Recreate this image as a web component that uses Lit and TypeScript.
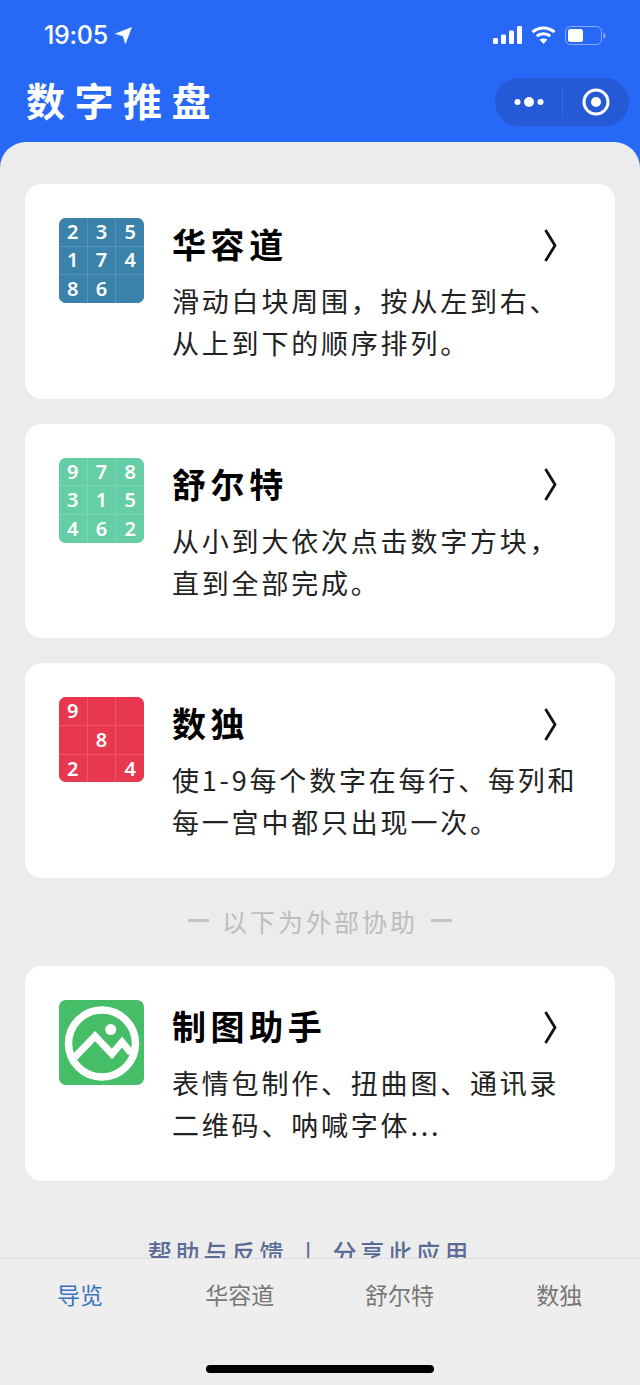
import { LitElement, html, css } from "lit";
import { customElement } from "lit/decorators.js";

const chevron = html`<svg class="chev" width="13" height="33" viewBox="0 0 13 33"><path d="M1.5 1 L11 16.5 L1.5 32" fill="none" stroke="#111" stroke-width="2.8"/></svg>`;

const mountain = html`<svg class="tile" viewBox="0 0 85 85" width="85" height="85">
  <rect width="85" height="85" rx="7" fill="#46bd67"/>
  <circle cx="43" cy="43.5" r="33.5" fill="none" stroke="#fff" stroke-width="7.5"/>
  <polyline points="16,57 36,36 53,54 63,42 72,53" fill="none" stroke="#fff" stroke-width="7"/>
  <circle cx="51.7" cy="29.5" r="5.5" fill="#fff"/>
</svg>`;

const CARDS = [
  { tone: "blue", cells: ["2","3","5","1","7","4","8","6",""], title: "华容道", lines: ["滑动白块周围，按从左到右、", "从上到下的顺序排列。"] },
  { tone: "green", cells: ["9","7","8","3","1","5","4","6","2"], title: "舒尔特", lines: ["从小到大依次点击数字方块，", "直到全部完成。"] },
  { tone: "red", cells: ["9","","","","8","","2","","4"], title: "数独", lines: ["使1-9每个数字在每行、每列和", "每一宫中都只出现一次。"] },
];

@customElement("app-root")
export class AppRoot extends LitElement {
  static styles = css`
    :host { display: block; width: 640px; height: 1385px; overflow: hidden; font-family: "Noto Sans CJK SC", "Noto Sans", sans-serif; background: #ececec; }
    .page { display: flex; flex-direction: column; height: 1385px; }
    header { background: #2868f6; height: 142px; flex: none; color: #fff; display: flex; flex-direction: column; box-sizing: border-box; padding: 0 11px 0 26px; }
    .status { display: flex; justify-content: space-between; align-items: center; height: 24px; margin-top: 23px; padding: 0 23px 0 18px; }
    .time { display: flex; align-items: center; gap: 7px; font: 500 25px/24px Inter, "Liberation Sans", sans-serif; letter-spacing: -0.3px; }
    .sys { display: flex; align-items: center; gap: 9px; }
    .nav { display: flex; justify-content: space-between; align-items: center; margin-top: 31px; }
    h1 { margin: -7px 0 0; font-size: 39px; line-height: 48px; font-weight: 700; letter-spacing: 9.5px; }
    .capsule { width: 134px; height: 48px; border-radius: 24px; background: #2559d6; display: grid; grid-template-columns: 67px 1px 66px; align-items: center; justify-items: center; }
    .capsule i { width: 1px; height: 28px; background: #3a6cdf; }
    main { flex: 1; min-height: 0; overflow: hidden; background: #2868f6; }
    .sheet { background: #ececec; border-radius: 26px 26px 0 0; padding: 42px 25px 0; height: 100%; box-sizing: border-box; overflow: hidden; display: flex; flex-direction: column; gap: 25px; }
    .card { background: #fff; border-radius: 17px; height: 214.7px; flex: none; box-sizing: border-box; padding: 34px 34px 0; display: flex; gap: 28px; }
    .tile { flex: none; width: 85px; height: 85px; display: block; }
    .grid { border-radius: 7px; overflow: hidden; display: grid; grid-template-columns: repeat(3, 1fr); grid-template-rows: repeat(3, 1fr); gap: 1px; }
    .grid span { display: flex; align-items: center; justify-content: center; color: #fff; font: 600 20px/1 "Noto Sans", sans-serif; }
    .blue { background: #5592b5; } .blue span { background: #3a82a9; }
    .green { background: #7bd6b3; } .green span { background: #66cea6; }
    .red { background: #ec5468; } .red span { background: #e8384f; }
    .text { flex: 1; min-width: 0; }
    .row { display: flex; justify-content: space-between; align-items: center; height: 44px; margin-top: 4px; padding-right: 24px; margin-bottom: 14px; }
    h2 { margin: 0; font-size: 34px; line-height: 44px; font-weight: 700; letter-spacing: 4.6px; color: #000; }
    p { margin: 0; font-size: 27px; line-height: 42px; letter-spacing: 2.8px; color: #222; white-space: nowrap; }
    .chev { display: block; margin-top: 2px; }
    .sep { flex: none; height: 38px; box-sizing: border-box; padding-bottom: 3px; display: flex; justify-content: center; align-items: center; color: #bdbdbd; font-size: 25px; letter-spacing: 3px; gap: 13px; }
    .sep b { width: 21px; height: 3px; background: #c4c4c4; }
    .links { flex: none; color: #5a6c96; font-size: 24px; font-weight: 500; line-height: 36px; letter-spacing: 4px; margin-top: 28px; display: flex; justify-content: center; gap: 17px; padding-right: 20px; white-space: nowrap; }
    nav { flex: none; height: 127px; background: #eeeeee; border-top: 1px solid #dedede; box-sizing: border-box; position: relative; display: grid; grid-template-columns: repeat(4, 1fr); padding-right: 1px; }
    nav span { display: block; text-align: center; font-size: 23px; line-height: 36px; margin-top: 17px; color: #777; }
    nav span.on { color: #3a74bf; }
    .home { position: absolute; left: 206px; top: 106px; width: 228px; height: 8px; border-radius: 4px; background: #000; }
  `;

  render() {
    return html`<div class="page">
      <header>
        <div class="status">
          <div class="time">19:05
            <svg width="17" height="17" viewBox="0 0 17 17"><path d="M16.5 .5 L10.4 16.5 L8.2 9 L.5 6.8 Z" fill="#fff" stroke="#fff" stroke-width=".6" stroke-linejoin="round"/></svg>
          </div>
          <div class="sys">
            <svg width="29" height="18" viewBox="0 0 29 18"><g fill="#fff"><rect x="0" y="12" width="5" height="6" rx="1.2"/><rect x="8" y="8.5" width="5" height="9.5" rx="1.2"/><rect x="16" y="4.5" width="5" height="13.5" rx="1.2"/><rect x="24" y="0" width="5" height="18" rx="1.2"/></g></svg>
            <svg width="25" height="18" viewBox="0 0 25 18"><g fill="none" stroke="#fff" stroke-width="3"><path d="M1.5 6.2 C7.5 .6 17.5 .6 23.5 6.2"/><path d="M5.8 10.2 C9.5 7 15.5 7 19.2 10.2"/></g><path d="M12.5 18 L8.6 13.6 C10.8 12 14.2 12 16.4 13.6 Z" fill="#fff"/></svg>
            <svg width="41" height="19" viewBox="0 0 41 19"><rect x=".5" y=".5" width="36" height="18" rx="5" fill="none" stroke="#fff" stroke-opacity=".45"/><rect x="3" y="3" width="15" height="13" rx="2.5" fill="#fff"/><path d="M38.5 6.5 C40 7 40.5 8 40.5 9.5 C40.5 11 40 12 38.5 12.5 Z" fill="#fff" fill-opacity=".5"/></svg>
          </div>
        </div>
        <div class="nav">
          <h1>数字推盘</h1>
          <div class="capsule">
            <svg width="30" height="12" viewBox="0 0 30 12"><g fill="#fff"><circle cx="3.5" cy="6" r="3"/><circle cx="15" cy="6" r="5"/><circle cx="26.5" cy="6" r="3"/></g></svg>
            <i></i>
            <svg width="28" height="28" viewBox="0 0 28 28"><circle cx="14" cy="14" r="12" fill="none" stroke="#fff" stroke-width="3"/><circle cx="14" cy="14" r="5" fill="#fff"/></svg>
          </div>
        </div>
      </header>
      <main><div class="sheet">
        ${CARDS.map((c) => html`<section class="card">
          <div class="tile grid ${c.tone}">${c.cells.map((n) => html`<span>${n}</span>`)}</div>
          <div class="text">
            <div class="row"><h2>${c.title}</h2>${chevron}</div>
            ${c.lines.map((l) => html`<p>${l}</p>`)}
          </div>
        </section>`)}
        <div class="sep"><b></b><span>以下为外部协助</span><b></b></div>
        <section class="card">
          ${mountain}
          <div class="text">
            <div class="row"><h2>制图助手</h2>${chevron}</div>
            <p>表情包制作、扭曲图、通讯录</p>
            <p>二维码、呐喊字体...</p>
          </div>
        </section>
        <div class="links"><span>帮助与反馈</span><span>|</span><span>分享此应用</span></div>
      </div></main>
      <nav>
        <span class="on">导览</span><span>华容道</span><span>舒尔特</span><span>数独</span>
        <div class="home"></div>
      </nav>
    </div>`;
  }
}
